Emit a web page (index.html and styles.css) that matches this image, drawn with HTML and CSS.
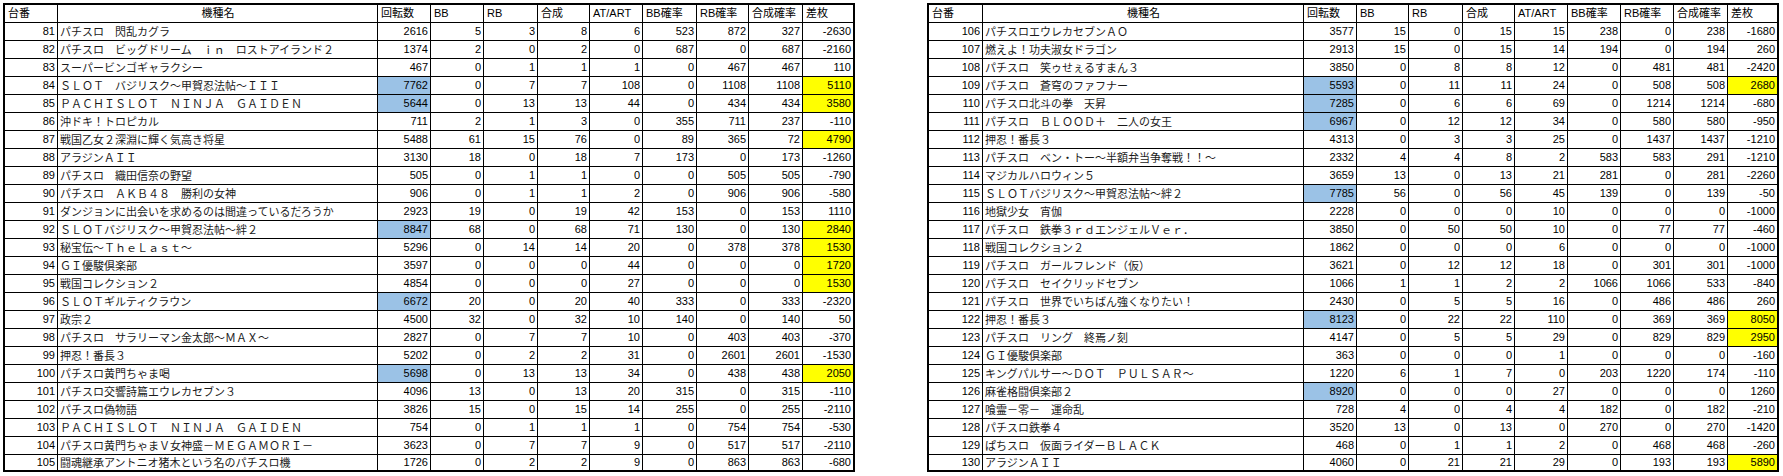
FILE: index.html
```html
<!DOCTYPE html>
<html lang="ja">
<head>
<meta charset="utf-8">
<title>台番データ</title>
<link rel="stylesheet" href="styles.css">
</head>
<body>
<div class="sheet">
<table class="grid t1">
<thead>
<tr><th class="c1">台番</th><th class="c2 ctr">機種名</th><th class="c3">回転数</th><th class="c4">BB</th><th class="c5">RB</th><th class="c6">合成</th><th class="c7">AT/ART</th><th class="c8">BB確率</th><th class="c9">RB確率</th><th class="c10">合成確率</th><th class="c11">差枚</th></tr>
</thead>
<tbody>
<tr><td>81</td><td class="nm">パチスロ　閃乱カグラ</td><td>2616</td><td>5</td><td>3</td><td>8</td><td>6</td><td>523</td><td>872</td><td>327</td><td>-2630</td></tr>
<tr><td>82</td><td class="nm">パチスロ　ビッグドリーム　ｉｎ　ロストアイランド２</td><td>1374</td><td>2</td><td>0</td><td>2</td><td>0</td><td>687</td><td>0</td><td>687</td><td>-2160</td></tr>
<tr><td>83</td><td class="nm">スーパービンゴギャラクシー</td><td>467</td><td>0</td><td>1</td><td>1</td><td>1</td><td>0</td><td>467</td><td>467</td><td>110</td></tr>
<tr><td>84</td><td class="nm">ＳＬＯＴ　バジリスク～甲賀忍法帖～ＩＩＩ</td><td class="blue">7762</td><td>0</td><td>7</td><td>7</td><td>108</td><td>0</td><td>1108</td><td>1108</td><td class="yel">5110</td></tr>
<tr><td>85</td><td class="nm">ＰＡＣＨＩＳＬＯＴ　ＮＩＮＪＡ　ＧＡＩＤＥＮ</td><td class="blue">5644</td><td>0</td><td>13</td><td>13</td><td>44</td><td>0</td><td>434</td><td>434</td><td class="yel">3580</td></tr>
<tr><td>86</td><td class="nm">沖ドキ！トロピカル</td><td>711</td><td>2</td><td>1</td><td>3</td><td>0</td><td>355</td><td>711</td><td>237</td><td>-110</td></tr>
<tr><td>87</td><td class="nm">戦国乙女２深淵に輝く気高き将星</td><td>5488</td><td>61</td><td>15</td><td>76</td><td>0</td><td>89</td><td>365</td><td>72</td><td class="yel">4790</td></tr>
<tr><td>88</td><td class="nm">アラジンＡＩＩ</td><td>3130</td><td>18</td><td>0</td><td>18</td><td>7</td><td>173</td><td>0</td><td>173</td><td>-1260</td></tr>
<tr><td>89</td><td class="nm">パチスロ　織田信奈の野望</td><td>505</td><td>0</td><td>1</td><td>1</td><td>0</td><td>0</td><td>505</td><td>505</td><td>-790</td></tr>
<tr><td>90</td><td class="nm">パチスロ　ＡＫＢ４８　勝利の女神</td><td>906</td><td>0</td><td>1</td><td>1</td><td>2</td><td>0</td><td>906</td><td>906</td><td>-580</td></tr>
<tr><td>91</td><td class="nm">ダンジョンに出会いを求めるのは間違っているだろうか</td><td>2923</td><td>19</td><td>0</td><td>19</td><td>42</td><td>153</td><td>0</td><td>153</td><td>1110</td></tr>
<tr><td>92</td><td class="nm">ＳＬＯＴバジリスク～甲賀忍法帖～絆２</td><td class="blue">8847</td><td>68</td><td>0</td><td>68</td><td>71</td><td>130</td><td>0</td><td>130</td><td class="yel">2840</td></tr>
<tr><td>93</td><td class="nm">秘宝伝～ＴｈｅＬａｓｔ～</td><td>5296</td><td>0</td><td>14</td><td>14</td><td>20</td><td>0</td><td>378</td><td>378</td><td class="yel">1530</td></tr>
<tr><td>94</td><td class="nm">ＧＩ優駿倶楽部</td><td>3597</td><td>0</td><td>0</td><td>0</td><td>44</td><td>0</td><td>0</td><td>0</td><td class="yel">1720</td></tr>
<tr><td>95</td><td class="nm">戦国コレクション２</td><td>4854</td><td>0</td><td>0</td><td>0</td><td>27</td><td>0</td><td>0</td><td>0</td><td class="yel">1530</td></tr>
<tr><td>96</td><td class="nm">ＳＬＯＴギルティクラウン</td><td class="blue">6672</td><td>20</td><td>0</td><td>20</td><td>40</td><td>333</td><td>0</td><td>333</td><td>-2320</td></tr>
<tr><td>97</td><td class="nm">政宗２</td><td>4500</td><td>32</td><td>0</td><td>32</td><td>10</td><td>140</td><td>0</td><td>140</td><td>50</td></tr>
<tr><td>98</td><td class="nm">パチスロ　サラリーマン金太郎～ＭＡＸ～</td><td>2827</td><td>0</td><td>7</td><td>7</td><td>10</td><td>0</td><td>403</td><td>403</td><td>-370</td></tr>
<tr><td>99</td><td class="nm">押忍！番長３</td><td>5202</td><td>0</td><td>2</td><td>2</td><td>31</td><td>0</td><td>2601</td><td>2601</td><td>-1530</td></tr>
<tr><td>100</td><td class="nm">パチスロ黄門ちゃま喝</td><td class="blue">5698</td><td>0</td><td>13</td><td>13</td><td>34</td><td>0</td><td>438</td><td>438</td><td class="yel">2050</td></tr>
<tr><td>101</td><td class="nm">パチスロ交響詩篇エウレカセブン３</td><td>4096</td><td>13</td><td>0</td><td>13</td><td>20</td><td>315</td><td>0</td><td>315</td><td>-110</td></tr>
<tr><td>102</td><td class="nm">パチスロ偽物語</td><td>3826</td><td>15</td><td>0</td><td>15</td><td>14</td><td>255</td><td>0</td><td>255</td><td>-2110</td></tr>
<tr><td>103</td><td class="nm">ＰＡＣＨＩＳＬＯＴ　ＮＩＮＪＡ　ＧＡＩＤＥＮ</td><td>754</td><td>0</td><td>1</td><td>1</td><td>1</td><td>0</td><td>754</td><td>754</td><td>-530</td></tr>
<tr><td>104</td><td class="nm">パチスロ黄門ちゃまＶ女神盛－ＭＥＧＡＭＯＲＩ－</td><td>3623</td><td>0</td><td>7</td><td>7</td><td>9</td><td>0</td><td>517</td><td>517</td><td>-2110</td></tr>
<tr><td>105</td><td class="nm">闘魂継承アントニオ猪木という名のパチスロ機</td><td>1726</td><td>0</td><td>2</td><td>2</td><td>9</td><td>0</td><td>863</td><td>863</td><td>-680</td></tr>
</tbody>
</table>

<table class="grid t2">
<thead>
<tr><th class="c1">台番</th><th class="c2 ctr">機種名</th><th class="c3">回転数</th><th class="c4">BB</th><th class="c5">RB</th><th class="c6">合成</th><th class="c7">AT/ART</th><th class="c8">BB確率</th><th class="c9">RB確率</th><th class="c10">合成確率</th><th class="c11">差枚</th></tr>
</thead>
<tbody>
<tr><td>106</td><td class="nm">パチスロエウレカセブンＡＯ</td><td>3577</td><td>15</td><td>0</td><td>15</td><td>15</td><td>238</td><td>0</td><td>238</td><td>-1680</td></tr>
<tr><td>107</td><td class="nm">燃えよ！功夫淑女ドラゴン</td><td>2913</td><td>15</td><td>0</td><td>15</td><td>14</td><td>194</td><td>0</td><td>194</td><td>260</td></tr>
<tr><td>108</td><td class="nm">パチスロ　笑ゥせぇるすまん３</td><td>3850</td><td>0</td><td>8</td><td>8</td><td>12</td><td>0</td><td>481</td><td>481</td><td>-2420</td></tr>
<tr><td>109</td><td class="nm">パチスロ　蒼穹のファフナー</td><td class="blue">5593</td><td>0</td><td>11</td><td>11</td><td>24</td><td>0</td><td>508</td><td>508</td><td class="yel">2680</td></tr>
<tr><td>110</td><td class="nm">パチスロ北斗の拳　天昇</td><td class="blue">7285</td><td>0</td><td>6</td><td>6</td><td>69</td><td>0</td><td>1214</td><td>1214</td><td>-680</td></tr>
<tr><td>111</td><td class="nm">パチスロ　ＢＬＯＯＤ＋　二人の女王</td><td class="blue">6967</td><td>0</td><td>12</td><td>12</td><td>34</td><td>0</td><td>580</td><td>580</td><td>-950</td></tr>
<tr><td>112</td><td class="nm">押忍！番長３</td><td>4313</td><td>0</td><td>3</td><td>3</td><td>25</td><td>0</td><td>1437</td><td>1437</td><td>-1210</td></tr>
<tr><td>113</td><td class="nm">パチスロ　ベン・トー～半額弁当争奪戦！！～</td><td>2332</td><td>4</td><td>4</td><td>8</td><td>2</td><td>583</td><td>583</td><td>291</td><td>-1210</td></tr>
<tr><td>114</td><td class="nm">マジカルハロウィン５</td><td>3659</td><td>13</td><td>0</td><td>13</td><td>21</td><td>281</td><td>0</td><td>281</td><td>-2260</td></tr>
<tr><td>115</td><td class="nm">ＳＬＯＴバジリスク～甲賀忍法帖～絆２</td><td class="blue">7785</td><td>56</td><td>0</td><td>56</td><td>45</td><td>139</td><td>0</td><td>139</td><td>-50</td></tr>
<tr><td>116</td><td class="nm">地獄少女　宵伽</td><td>2228</td><td>0</td><td>0</td><td>0</td><td>10</td><td>0</td><td>0</td><td>0</td><td>-1000</td></tr>
<tr><td>117</td><td class="nm">パチスロ　鉄拳３ｒｄエンジェルＶｅｒ．</td><td>3850</td><td>0</td><td>50</td><td>50</td><td>10</td><td>0</td><td>77</td><td>77</td><td>-460</td></tr>
<tr><td>118</td><td class="nm">戦国コレクション２</td><td>1862</td><td>0</td><td>0</td><td>0</td><td>6</td><td>0</td><td>0</td><td>0</td><td>-1000</td></tr>
<tr><td>119</td><td class="nm">パチスロ　ガールフレンド（仮）</td><td>3621</td><td>0</td><td>12</td><td>12</td><td>18</td><td>0</td><td>301</td><td>301</td><td>-1000</td></tr>
<tr><td>120</td><td class="nm">パチスロ　セイクリッドセブン</td><td>1066</td><td>1</td><td>1</td><td>2</td><td>2</td><td>1066</td><td>1066</td><td>533</td><td>-840</td></tr>
<tr><td>121</td><td class="nm">パチスロ　世界でいちばん強くなりたい！</td><td>2430</td><td>0</td><td>5</td><td>5</td><td>16</td><td>0</td><td>486</td><td>486</td><td>260</td></tr>
<tr><td>122</td><td class="nm">押忍！番長３</td><td class="blue">8123</td><td>0</td><td>22</td><td>22</td><td>110</td><td>0</td><td>369</td><td>369</td><td class="yel">8050</td></tr>
<tr><td>123</td><td class="nm">パチスロ　リング　終焉ノ刻</td><td>4147</td><td>0</td><td>5</td><td>5</td><td>29</td><td>0</td><td>829</td><td>829</td><td class="yel">2950</td></tr>
<tr><td>124</td><td class="nm">ＧＩ優駿倶楽部</td><td>363</td><td>0</td><td>0</td><td>0</td><td>1</td><td>0</td><td>0</td><td>0</td><td>-160</td></tr>
<tr><td>125</td><td class="nm">キングパルサー～ＤＯＴ　ＰＵＬＳＡＲ～</td><td>1220</td><td>6</td><td>1</td><td>7</td><td>0</td><td>203</td><td>1220</td><td>174</td><td>-110</td></tr>
<tr><td>126</td><td class="nm">麻雀格闘倶楽部２</td><td class="blue">8920</td><td>0</td><td>0</td><td>0</td><td>27</td><td>0</td><td>0</td><td>0</td><td>1260</td></tr>
<tr><td>127</td><td class="nm">喰霊－零－　運命乱</td><td>728</td><td>4</td><td>0</td><td>4</td><td>4</td><td>182</td><td>0</td><td>182</td><td>-210</td></tr>
<tr><td>128</td><td class="nm">パチスロ鉄拳４</td><td>3520</td><td>13</td><td>0</td><td>13</td><td>0</td><td>270</td><td>0</td><td>270</td><td>-1420</td></tr>
<tr><td>129</td><td class="nm">ぱちスロ　仮面ライダーＢＬＡＣＫ</td><td>468</td><td>0</td><td>1</td><td>1</td><td>2</td><td>0</td><td>468</td><td>468</td><td>-260</td></tr>
<tr><td>130</td><td class="nm">アラジンＡＩＩ</td><td>4060</td><td>0</td><td>21</td><td>21</td><td>29</td><td>0</td><td>193</td><td>193</td><td class="yel">5890</td></tr>
</tbody>
</table>
</div>
</body>
</html>
```

FILE: styles.css
```css
html, body {
  margin: 0;
  padding: 0;
  background: #ffffff;
}

body {
  font-family: "Liberation Sans", "Noto Sans CJK JP", sans-serif;
  font-size: 11px;
  color: #000;
}

.sheet {
  display: flex;
  align-items: flex-start;
  gap: 72px;
  padding: 3px 0 0 3px;
}

.grid {
  border-collapse: separate;
  border-spacing: 0;
  table-layout: fixed;
  width: 852px;
  border: 2px solid #000;
  flex: none;
}

.grid th,
.grid td {
  box-sizing: border-box;
  height: 18px;
  padding: 0 2px 0 3px;
  border-right: 1px solid #000;
  border-bottom: 1px solid #000;
  line-height: 17px;
  white-space: nowrap;
  overflow: hidden;
  vertical-align: middle;
}

.grid th {
  font-weight: normal;
  text-align: left;
}

.grid th.ctr {
  text-align: center;
}

.grid td {
  text-align: right;
}

.grid td.nm {
  text-align: left;
  padding-left: 2px;
  font-family: "Noto Sans CJK JP", sans-serif;
  color: #1a1a1a;
}

.grid th:last-child,
.grid td:last-child {
  border-right: none;
}

.grid tbody tr:last-child td {
  border-bottom: none;
  height: 15px;
  line-height: 15px;
}

.grid .blue {
  background: #9bc2e6;
}

.grid .yel {
  background: #ffff00;
}

/* column widths, left table */
.t1 .c1 { width: 53px; }
.t1 .c2 { width: 320px; }
.t1 .c3 { width: 53px; }
.t1 .c4 { width: 53px; }
.t1 .c5 { width: 54px; }
.t1 .c6 { width: 52px; }
.t1 .c7 { width: 53px; }
.t1 .c8 { width: 54px; }
.t1 .c9 { width: 52px; }
.t1 .c10 { width: 54px; }
.t1 .c11 { width: 50px; }

/* column widths, right table */
.t2 .c1 { width: 54px; }
.t2 .c2 { width: 321px; }
.t2 .c3 { width: 53px; }
.t2 .c4 { width: 52px; }
.t2 .c5 { width: 54px; }
.t2 .c6 { width: 52px; }
.t2 .c7 { width: 53px; }
.t2 .c8 { width: 53px; }
.t2 .c9 { width: 53px; }
.t2 .c10 { width: 54px; }
.t2 .c11 { width: 49px; }
```
